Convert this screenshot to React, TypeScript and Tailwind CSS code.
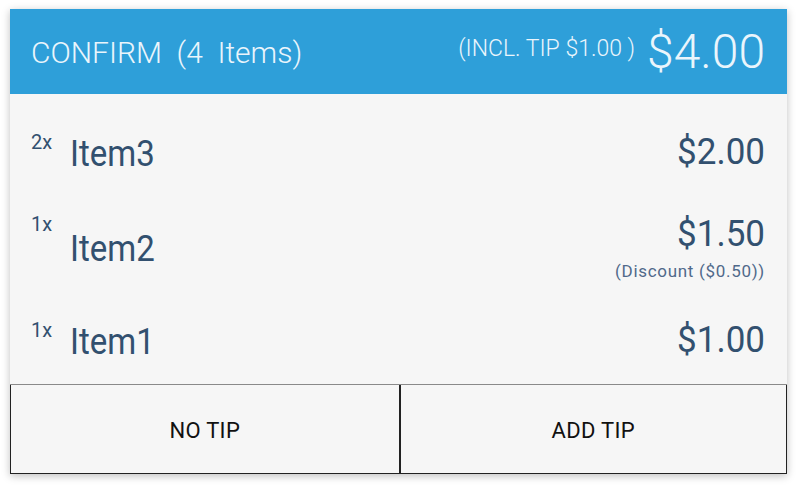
import React from "react";

interface LineItem {
  qty: number;
  name: string;
  price: string;
  note?: string;
}

const items: LineItem[] = [
  { qty: 2, name: "Item3", price: "$2.00" },
  { qty: 1, name: "Item2", price: "$1.50", note: "(Discount ($0.50))" },
  { qty: 1, name: "Item1", price: "$1.00" },
];

const ItemRow = ({ item }: { item: LineItem }) => {
  const hasNote = !!item.note;
  return (
    <div className="flex justify-between h-[94px] pr-[22px] pl-[21px]">
      <div className="flex items-start">
        <span className={`text-[20px] leading-none w-[39px] ${hasNote ? "pt-[26px]" : "pt-[38px]"}`}>{item.qty}x</span>
        <span className={`text-[33px] leading-none scale-y-[1.13] ${hasNote ? "pt-[41px]" : "pt-[40px]"}`}>{item.name}</span>
      </div>
      <div className={`flex flex-col items-end ${hasNote ? "pt-[28px]" : "pt-[40px]"}`}>
        <span className="text-[35px] leading-none scale-y-[1.08]">{item.price}</span>
        {item.note && <span className="text-[17px] leading-none mt-[12px] tracking-[0.7px] text-[#50698a]">{item.note}</span>}
      </div>
    </div>
  );
};

export default function App() {
  return (
    <div className="w-[800px] h-[488px] bg-white pt-[9px] pl-[10px]" style={{ fontFamily: "Roboto, 'Noto Sans', sans-serif" }}>
      <div className="w-[777px] shadow-[0_2px_8px_rgba(0,0,0,0.25)]">
        <div className="h-[85px] bg-[#2e9fd9] flex items-center justify-between pl-[21px] pr-[22px] text-[#eaf5fc] font-light">
          <span className="text-[30px] whitespace-pre pt-[2px]">CONFIRM  (4  Items)</span>
          <div className="flex items-center">
            <span className="text-[23px] whitespace-pre mr-[12px] mb-[4px]">(INCL. TIP $1.00 )</span>
            <span className="text-[48px] leading-none">$4.00</span>
          </div>
        </div>
        <div className="bg-[#f6f6f6] h-[290px] text-[#32506f]">
          {items.map((item, i) => (
            <ItemRow key={i} item={item} />
          ))}
        </div>
        <div className="grid grid-cols-2 h-[90px] bg-[#f6f6f6] border-t border-[#8a8a8a]">
          <button className="border-l border-b border-[#222] text-[22px] tracking-[0.3px] text-[#111] pt-[3px]">NO TIP</button>
          <button className="border-l-2 border-r border-b border-[#222] text-[22px] tracking-[0.3px] text-[#111] pt-[3px]">ADD TIP</button>
        </div>
      </div>
    </div>
  );
}
